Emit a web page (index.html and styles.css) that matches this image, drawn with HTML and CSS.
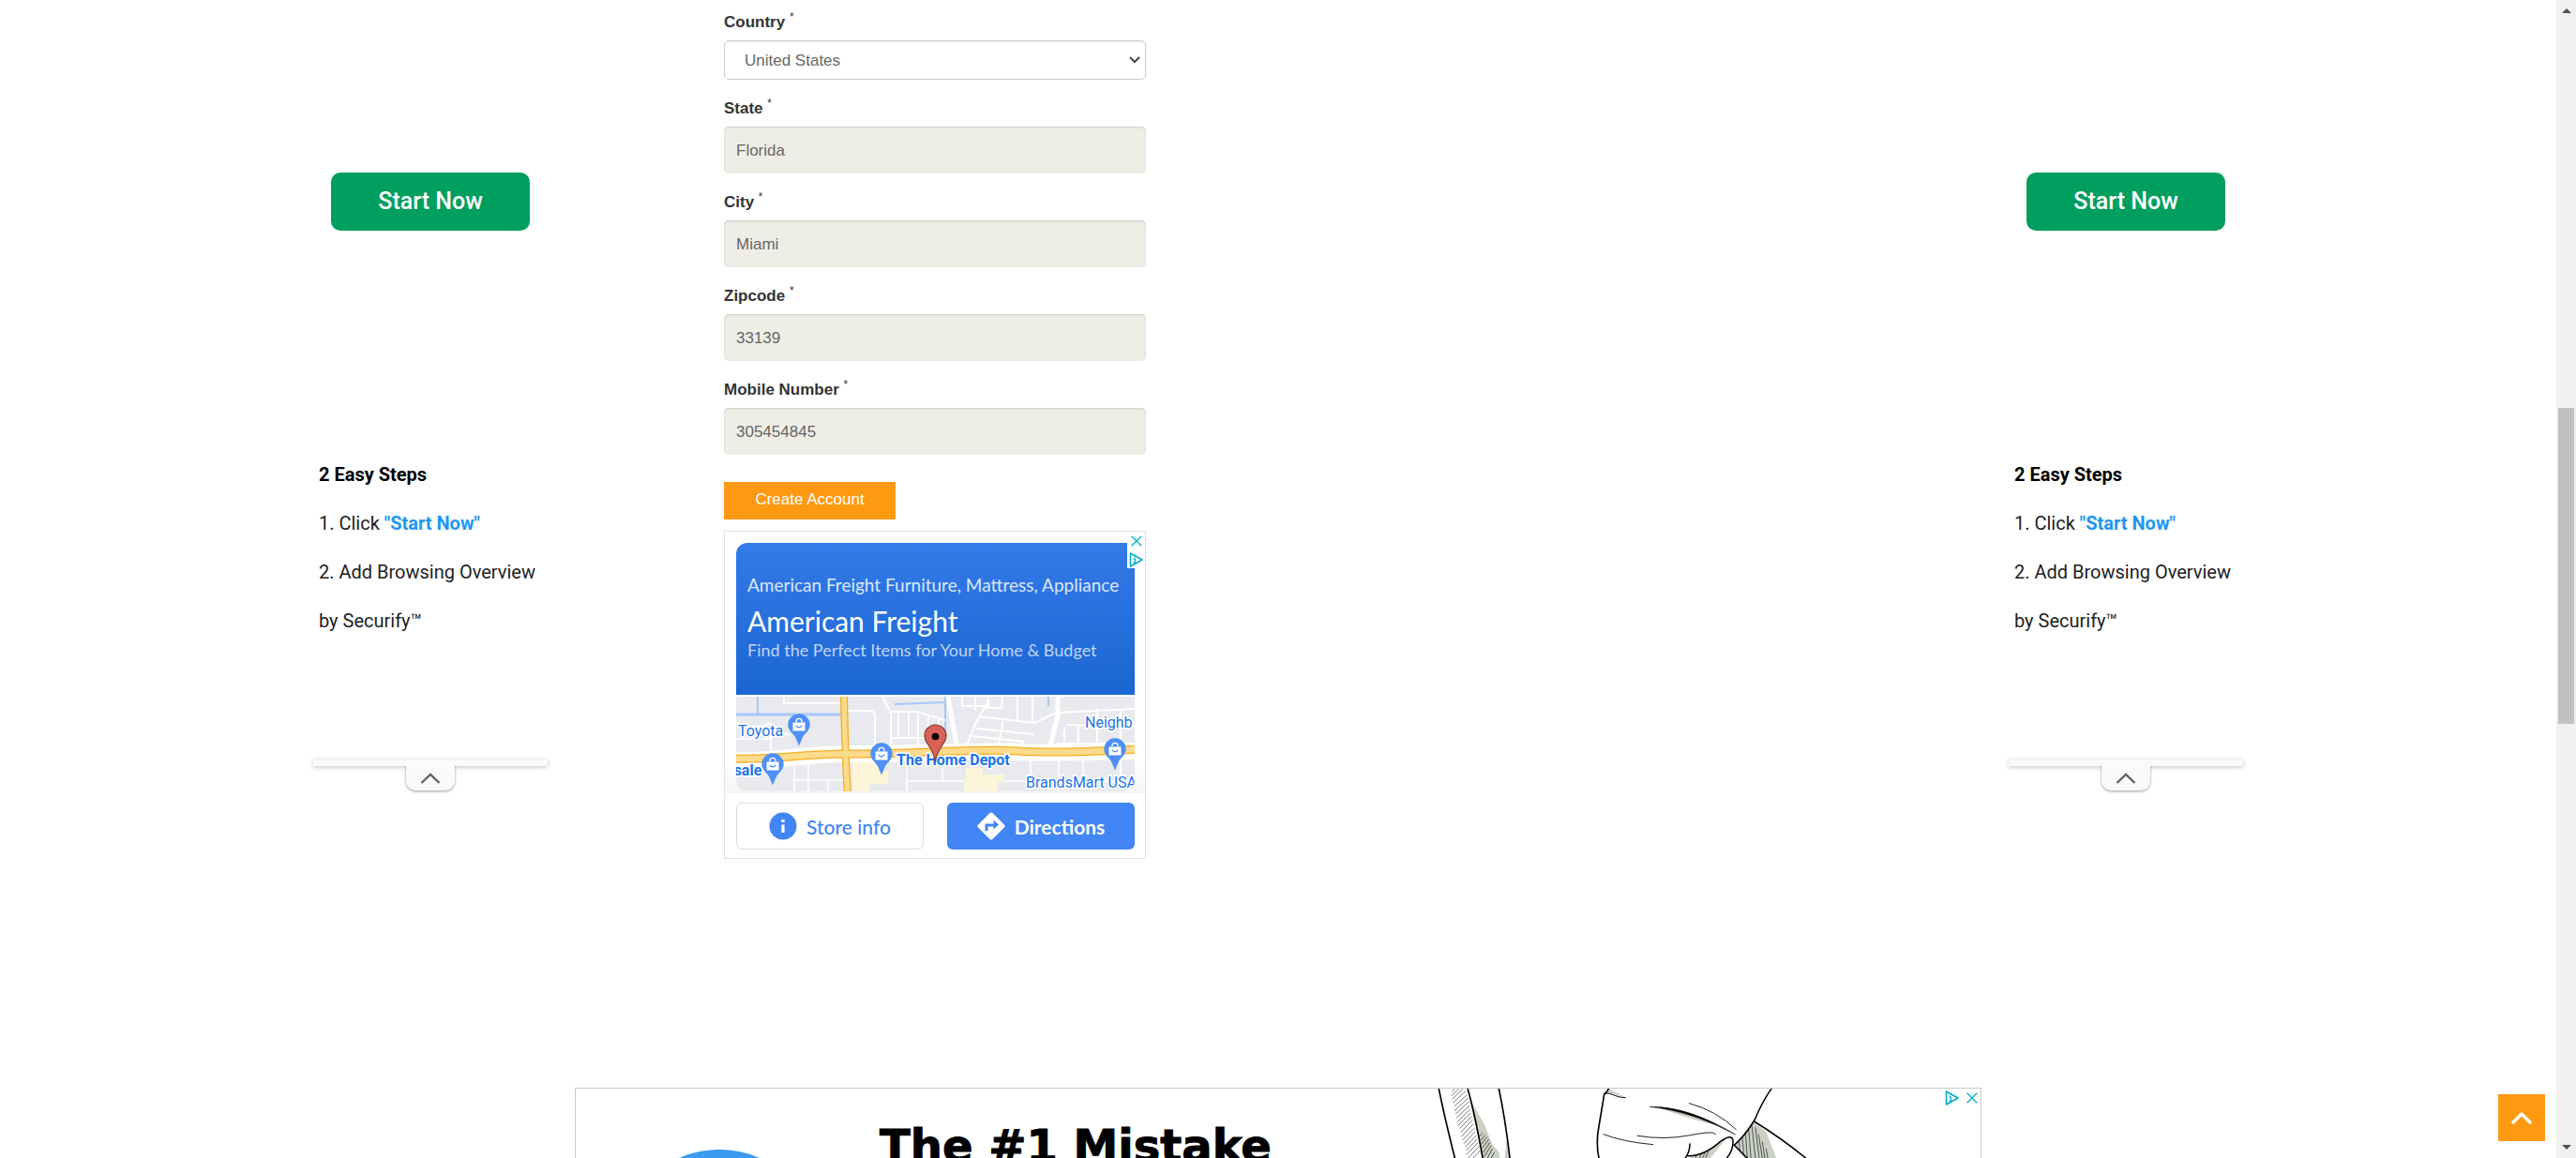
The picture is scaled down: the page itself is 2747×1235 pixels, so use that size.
FILE: index.html
```html
<!DOCTYPE html>
<html lang="en">
<head>
<meta charset="utf-8">
<title>Create Account</title>
<link rel="stylesheet" href="styles.css">
</head>
<body>
<svg class="defs" aria-hidden="true">
  <defs>
    <symbol id="adchoices" viewBox="0 0 15 16">
      <path d="M1.500 1v14l12.500-7z" fill="none" stroke="#00aecd" stroke-width="1.6" stroke-linejoin="round"/>
      <path d="M4.700 7h1.600v4.200M4.500 11.200h3.700M5.500 4.600h1.400" fill="none" stroke="#00aecd" stroke-width="1.3"/>
    </symbol>
    <symbol id="cross" viewBox="0 0 12 12">
      <path d="M.7.7l10.6 10.6M11.3.7L.7 11.3" fill="none" stroke="#00aecd" stroke-width="1.3"/>
    </symbol>
    <symbol id="shop" viewBox="0 0 24 35" overflow="visible">
      <path d="M12 34.500L8 25C6 21.500.3 18 .3 12a11.700 11.700 0 0 1 23.400 0c0 6-5.700 9.500-7.700 13z" fill="#4f8ff7"/>
      <path d="M5.500 9.500h13v9h-13z" fill="#fff"/>
      <path d="M9 9.500V8.300a3 3 0 0 1 6 0v1.200" fill="none" stroke="#fff" stroke-width="1.300"/>
      <path d="M8.800 12.800q3.200 4 6.400 0" fill="none" stroke="#4f8ff7" stroke-width="1.300"/>
    </symbol>
  </defs>
</svg>
<div class="window">
  <main class="page">
    <aside class="rail">
      <button class="start" type="button">Start Now</button>
      <div class="steps">
        <strong>2 Easy Steps</strong>
        <p>1. Click <a href="#start">"Start Now"</a></p>
        <p>2. Add Browsing Overview by Securify™</p>
      </div>
      <div class="anchor">
        <button class="tab" type="button" aria-label="Collapse"><svg viewBox="0 0 22 12"><path d="M1.500 11L11 2l9.500 9" fill="none" stroke="#616161" stroke-width="2.400"/></svg></button>
      </div>
    </aside>

    <div class="center">
      <form class="form">
        <div class="field">
          <label for="country">Country <sup>*</sup></label>
          <select id="country"><option>United States</option></select>
        </div>
        <div class="field">
          <label for="state">State <sup>*</sup></label>
          <input id="state" type="text" value="Florida">
        </div>
        <div class="field">
          <label for="city">City <sup>*</sup></label>
          <input id="city" type="text" value="Miami">
        </div>
        <div class="field">
          <label for="zip">Zipcode <sup>*</sup></label>
          <input id="zip" type="text" value="33139">
        </div>
        <div class="field">
          <label for="mobile">Mobile Number <sup>*</sup></label>
          <input id="mobile" type="text" value="305454845">
        </div>
        <button class="create" type="button">Create Account</button>
      </form>

      <section class="ad">
        <div class="ad-copy">
          <p>American Freight Furniture, Mattress, Appliance</p>
          <h2>American Freight</h2>
          <p class="sub">Find the Perfect Items for Your Home &amp; Budget</p>
        </div>
        <svg class="map" viewBox="0 0 425 101" preserveAspectRatio="xMidYMid slice">
          <rect width="425" height="101" fill="#e8eaed"/>
          <g fill="#fdf5d9">
            <path d="M124 69h30v10h8v14h-20v8h-18zM245 76h18v7h23v8h-7v10h-36v-10h2z"/>
          </g>
          <g fill="none" stroke="#a8c7fa">
            <path d="M0 19h112" stroke-width="3"/>
            <path d="M23 0v19M169 8l53-2M223 0v36M333 0v10" stroke-width="2"/>
          </g>
          <g fill="none" stroke="#fff" stroke-width="2">
            <path d="M51 0v7h62M37 28v30M0 28q20 8 37 0M37 40h20M118 15h24q6 0 6 6v32M148 53h26M156 0l9 17v36M165 16h28l30 9M173 17v28M184 17v28M194 17v35h28M205 19v26M216 22v22M165 44h50M241 0v10h28v-10M255 0v14M269 5l-13 22-12 30M258 21l60 7 24-11 83-4M263 12h20l1-12M300 0v25M316 0v28M256 34l62 6M252 42l54 6v8M285 24l-6 32M342 50h83M350 50v-18M352 30l73 2M385 12v38M410 14v70M365 50V30"/>
            <path d="M0 77h30M62 71v30M77 70v31M60 89l58 0M77 89v-20M98 88v13M182 66v24h62M182 90v11M286 90h139M314 68v33M344 68v33M370 66v24M220 76v14M0 45h37" stroke-width="1.500"/>
            <path d="M226 0l10 56M343 0v20l-9 36" stroke-width="5"/>
          </g>
          <path d="M-4 68C40 70 70 61 118 61C200 61 260 57 300 59S390 58 430 58" fill="none" stroke="#fff" stroke-width="18"/>
          <path d="M-4 66C40 68 70 61 118 61C200 61 260 55 300 58S390 58 430 56" fill="none" stroke="#f5ac1c" stroke-width="9"/>
          <path d="M115-3Q116 60 119 104" fill="none" stroke="#f5ac1c" stroke-width="8"/>
          <path d="M-4 66C40 68 70 61 118 61C200 61 260 55 300 58S390 58 430 56" fill="none" stroke="#fddb8c" stroke-width="6.500"/>
          <path d="M115-3Q116 60 119 104" fill="none" stroke="#fddb8c" stroke-width="5.500"/>
          <use href="#shop" x="55" y="18" width="24" height="35"/>
          <use href="#shop" x="27" y="60" width="24" height="35"/>
          <use href="#shop" x="143" y="49" width="24" height="35"/>
          <use href="#shop" x="392" y="44" width="24" height="35"/>
          <g class="map-text">
            <text x="2" y="42">Toyota</text>
            <text x="372" y="33">Neighb</text>
            <text x="309" y="97">BrandsMart USA</text>
            <text class="strong" x="-11" y="84">esale</text>
            <text class="strong" x="171" y="73">The Home Depot</text>
          </g>
          <path d="M212.500 70C211 54 201 51 201 41.500a11.500 11.500 0 0 1 23 0C224 51 214 54 212.500 70z" fill="#db6158" stroke="#7d3a36" stroke-width="1.200"/>
          <circle cx="212.500" cy="42.500" r="3.800"/>
        </svg>
        <div class="ad-actions">
          <button class="store" type="button">
            <svg viewBox="0 0 30 30"><circle cx="15" cy="15" r="14.500" fill="#4285f4"/><path d="M15 13.500v8.500M15 8v3" stroke="#fff" stroke-width="3.200"/></svg>
            Store info
          </button>
          <button class="directions" type="button">
            <svg viewBox="0 0 30 30"><path d="M15 2.500L27.500 15 15 27.500 2.500 15z" fill="#fff" stroke="#fff" stroke-width="4" stroke-linejoin="round"/><path d="M10 20v-6h9" fill="none" stroke="#4285f4" stroke-width="3"/><path d="M17.500 8.500v10l5.500-5z" fill="#4285f4"/></svg>
            Directions
          </button>
        </div>
        <div class="ad-marks">
          <button type="button" aria-label="Close ad"><svg class="x"><use href="#cross"/></svg></button>
          <button type="button" aria-label="Ad choices"><svg class="i"><use href="#adchoices"/></svg></button>
        </div>
      </section>

      <section class="banner">
        <span class="disc"></span>
        <h2>The #1 Mistake</h2>
        <svg class="sketch" viewBox="0 33 1260 330" fill="none" stroke="#000" stroke-linecap="round">
          <g fill="#ccd1c6" stroke="none">
            <path d="M140 60L190 150 214 212 236 236 240 270H188z"/>
            <path d="M262 180L252 270h20zM588 33l52 28-60-17zM740 92Q830 92 930 150Q850 132 740 92zM1050 140L1090 170 1128 270H1030L990 213zM850 246Q900 240 965 190L900 270H840z"/>
          </g>
          <path d="M42 28Q60 120 98 270M134 28Q160 120 186 270M234 28Q256 130 272 270" stroke-width="5"/>
          <path d="M86 42l8-8M84 56l22-22M86 66l34-32M88 78l40-36M94 88l38-34M94 104l42-40M97 114l40-38M100 126l40-38M102 140l40-40M104 152l40-40M110 160l37-37M114 172l36-38M116 186l36-38M120 197l35-36M124 208l34-36M130 218l32-34M132 230l32-34M132 244l36-38M134 258l38-40M146 262l28-30" stroke-width="1.600"/>
          <path d="M176 184l6-8M178 198l12-16M180 210l16-22M184 222l18-26M186 236l20-30M188 250l22-34M196 260l18-34M208 260l12-22M1004 204l2 26M1014 188l4 52M1024 174l6 80M1034 160l8 100M1044 150l12 106M1056 158l12 98M1066 180l12 76M1078 204l8 52M1090 226l6 32M868 246l-6 12M882 244l-10 18M894 240l-10 20M906 234l-10 22" stroke-width="1.800"/>
          <path d="M586 33q-6 14-14 18c-4 30-14 80-21 130q-4 60 10 90" stroke-width="5"/>
          <path d="M574 48q14-2 30 6t36 8" stroke-width="3"/>
          <path d="M718 91Q840 88 992 180Q850 104 718 91z" fill="#000" stroke-width="1.500"/>
          <path d="M844 80q88 24 150 84M570 179q60 24 158 33M678 184q90 14 170-2t80-2" stroke-width="2.600"/>
          <path d="M1108 32q-30 42-54 100-30 50-66 82l50 50M1052 138Q1140 192 1225 262M846 210q0 24-14 45M840 248q50 2 104-46 36-26 40-4 2 32-22 60" stroke-width="4.500"/>
        </svg>
        <div class="banner-marks">
          <button type="button" aria-label="Ad choices"><svg class="i"><use href="#adchoices"/></svg></button>
          <button type="button" aria-label="Close ad"><svg class="x"><use href="#cross"/></svg></button>
        </div>
      </section>
    </div>

    <aside class="rail">
      <button class="start" type="button">Start Now</button>
      <div class="steps">
        <strong>2 Easy Steps</strong>
        <p>1. Click <a href="#start">"Start Now"</a></p>
        <p>2. Add Browsing Overview by Securify™</p>
      </div>
      <div class="anchor">
        <button class="tab" type="button" aria-label="Collapse"><svg viewBox="0 0 22 12"><path d="M1.500 11L11 2l9.500 9" fill="none" stroke="#616161" stroke-width="2.400"/></svg></button>
      </div>
    </aside>
    <button class="top" type="button" aria-label="Back to top"><svg viewBox="0 0 24 14"><path d="M3 12l9-9 9 9" fill="none" stroke="#fff" stroke-width="3.400" stroke-linecap="round" stroke-linejoin="round"/></svg></button>
  </main>
  <div class="scrollbar">
    <svg viewBox="0 0 10 5"><path d="M0 5l5-5 5 5z" fill="#505050"/></svg>
    <div class="track"><span class="thumb"></span></div>
    <svg viewBox="0 0 10 5"><path d="M0 0l5 5 5-5z" fill="#505050"/></svg>
  </div>
</div>
</body>
</html>
```

FILE: styles.css
```css
* { box-sizing: border-box; }
body { margin: 0; background: #fff; font-family: "Liberation Sans", Arial, sans-serif; font-size: 17px; color: #333; }
h2, p { margin: 0; font-weight: 400; }
button { border: 0; padding: 0; background: none; font: inherit; cursor: pointer; }
svg { display: block; }
.defs { position: absolute; width: 0; height: 0; }

.window { display: flex; height: 100vh; overflow: hidden; }
.page {
  position: relative;
  flex: 1;
  display: grid;
  grid-template-columns: 250px minmax(0, 1500px) 250px;
  justify-content: center;
  align-items: start;
  column-gap: 29px;
  overflow: hidden;
}

/* side ads */
.rail { padding-top: 184px; font-family: Roboto, sans-serif; font-size: 20px; line-height: 52px; color: #212121; }
.start { display: block; width: 212px; height: 62px; margin: 0 auto; border-radius: 10px; background: #009f5f; color: #fff; font-size: 25px; font-weight: 500; }
.steps { margin-top: 234px; padding-left: 6px; }
.steps strong { display: block; font-weight: 700; color: #000; }
.steps a { color: #2196f3; font-weight: 700; text-decoration: none; }
.anchor { height: 7px; margin-top: 122px; display: flex; justify-content: center; background: #fafafa; box-shadow: 0 1px 5px rgba(0, 0, 0, .25); }
.tab { height: 33px; width: 52px; display: flex; justify-content: center; align-items: center; background: #fafafa; border-radius: 0 0 10px 10px; box-shadow: 0 1px 3px rgba(0, 0, 0, .4); clip-path: inset(7px -6px -6px -6px); padding-top: 7px; }
.tab svg { width: 22px; height: 12px; }

/* form */
.form, .ad { width: 450px; margin-left: 159px; }
.form { padding-top: 12px; }
.field { display: grid; gap: 7px; margin-bottom: 19px; }
.field label { line-height: 24px; height: 24px; font-weight: 700; }
.field sup { font-size: 12px; font-weight: 400; line-height: 0; }
.field input, .field select { width: 100%; border-radius: 5px; font: inherit; color: #666; }
.field input { height: 50px; padding: 1px 13px 0; border: 0; background: #efeee6; box-shadow: inset 0 1px 2px rgba(0, 0, 0, .15); }
.field select {
  appearance: none;
  height: 42px;
  padding: 0 21px;
  border: 1px solid #ccc;
  background: #fff url("data:image/svg+xml,%3Csvg xmlns='http://www.w3.org/2000/svg' width='12' height='8'%3E%3Cpath d='M1 1l5 5 5-5' fill='none' stroke='%23444' stroke-width='2'/%3E%3C/svg%3E") no-repeat right 5px center;
  box-shadow: inset 0 1px 1px rgba(0, 0, 0, .08);
}
.create { display: block; width: 183px; height: 40px; margin-top: 29px; padding-bottom: 3px; background: #ff9912; color: #fff; }

/* map ad */
.ad { position: relative; margin-top: 12px; height: 350px; padding: 12px 11px 9px 12px; border: 1px solid #e0e0e0; display: flex; flex-direction: column; background: linear-gradient(#fff 240px, #f6f6f6 279px, #fff 279px); }
.ad-copy { height: 162px; padding: 31px 12px 0; border-radius: 12px 0 0 0; background: linear-gradient(#347ae8, #1b66d2); color: #dbe7fb; font-family: Lato, sans-serif; font-size: 19px; line-height: 28px; white-space: nowrap; }
.ad-copy h2 { color: #fff; font-size: 30px; line-height: 38px; padding-top: 5px; }
.ad-copy .sub { color: #bfd5f7; font-size: 18px; line-height: 24px; }
.map { width: 100%; height: 101px; margin-top: 2px; border-radius: 0 0 12px 12px; }
.map-text { font-family: Roboto, sans-serif; font-size: 16px; fill: #1a73e8; stroke: #fff; stroke-width: 3px; paint-order: stroke; }
.map-text .strong { font-weight: 700; }
.ad-actions { display: flex; justify-content: space-between; margin-top: 12px; }
.ad-actions button { display: flex; align-items: center; justify-content: center; gap: 10px; height: 50px; width: 200px; border-radius: 6px; font-family: Lato, sans-serif; font-size: 21px; font-weight: 500; }
.ad-actions svg { width: 30px; height: 30px; }
.ad-actions .store { border: 1px solid #dadce0; background: #fff; color: #4285f4; }
.ad-actions .directions { background: #4285f4; color: #fff; font-weight: 700; }
.ad-marks { position: absolute; top: 0; right: 0; width: 19px; height: 39px; background: #fff; display: flex; flex-direction: column; align-items: center; gap: 6px; padding-top: 4px; }
.x { width: 12px; height: 12px; }
.i { width: 15px; height: 16px; }

/* wide banner */
.banner { position: relative; display: flex; align-items: flex-start; margin-top: 244px; height: 312px; padding-left: 46px; border: 1px solid #c8c8c8; overflow: hidden; }
.disc { width: 214px; height: 214px; margin-top: 65px; border-radius: 50%; background: #3a9bf1; flex: none; }
.banner h2 { width: 581px; margin-top: 31px; padding-left: 64px; color: #000; font-family: "DejaVu Sans", sans-serif; font-size: 48px; line-height: 60px; font-weight: 700; -webkit-text-stroke: 1px #000; white-space: nowrap; }
.sketch { width: 420px; height: 110px; margin-left: 65px; }
.banner-marks { position: absolute; top: 2px; right: 3px; display: flex; align-items: center; gap: 8px; }

.top { position: absolute; right: 12px; bottom: 18px; width: 50px; height: 50px; display: flex; justify-content: center; align-items: center; background: #ff9912; }
.top svg { width: 24px; height: 14px; }

.scrollbar { width: 21px; flex: none; background: #f0f0f0; display: flex; flex-direction: column; align-items: center; padding: 9px 0; }
.scrollbar svg { width: 10px; height: 5px; }
.track { flex: 1; width: 17px; padding-top: 421px; }
.thumb { display: block; height: 337px; background: #c1c1c1; }
```
